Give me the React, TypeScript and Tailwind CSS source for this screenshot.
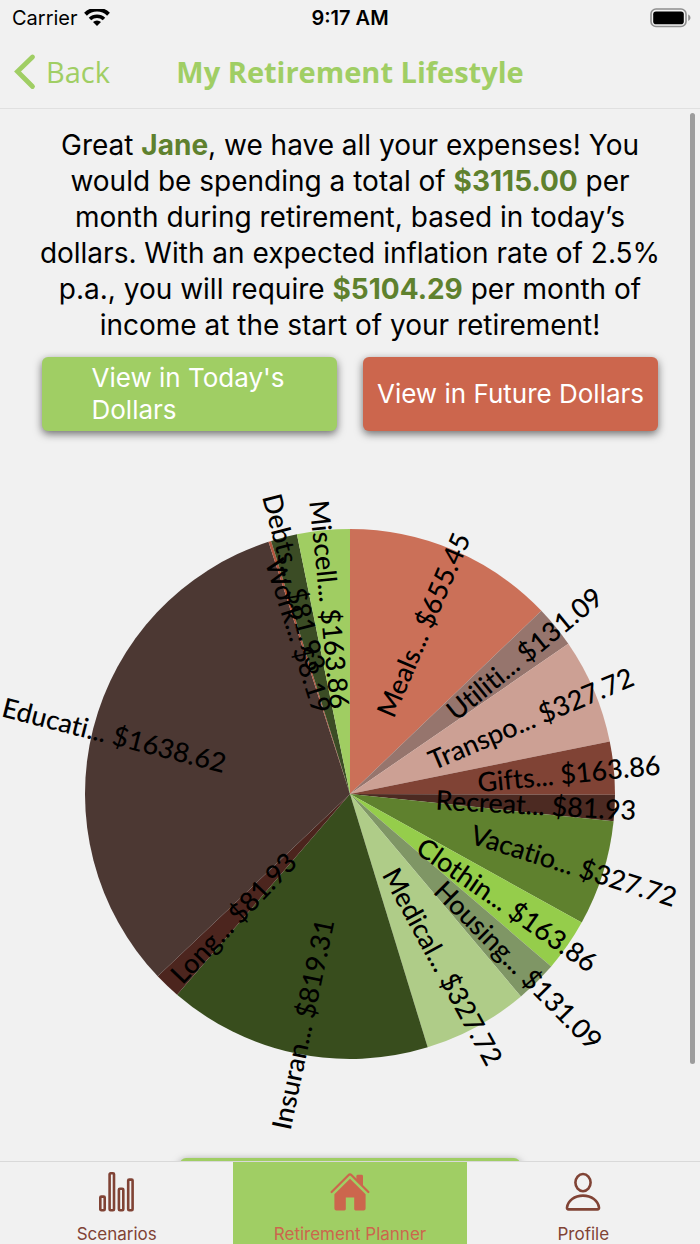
import { useState } from 'react';

type Expense = {
  name: string;
  amount: number;
  color: string;
};

const expenses: Expense[] = [
  { name: 'Meals...', amount: 655.45, color: '#cb7058' },
  { name: 'Utiliti...', amount: 131.09, color: '#96756d' },
  { name: 'Transpo...', amount: 327.72, color: '#cca094' },
  { name: 'Gifts...', amount: 163.86, color: '#804335' },
  { name: 'Recreat...', amount: 81.93, color: '#4c2a22' },
  { name: 'Vacatio...', amount: 327.72, color: '#5f812e' },
  { name: 'Clothin...', amount: 163.86, color: '#95cd4b' },
  { name: 'Housing...', amount: 131.09, color: '#7f9665' },
  { name: 'Medical...', amount: 327.72, color: '#afcc88' },
  { name: 'Insuran...', amount: 819.31, color: '#384d1d' },
  { name: 'Long...', amount: 81.93, color: '#4c251e' },
  { name: 'Educati...', amount: 1638.62, color: '#4c3833' },
  { name: 'Work...', amount: 8.19, color: '#b3563f' },
  { name: 'Debts...', amount: 81.93, color: '#3b4c25' },
  { name: 'Miscell...', amount: 163.86, color: '#a0cd62' },
];

const CX = 350;
const CY = 320;
const RADIUS = 265;

// angle in degrees, clockwise from the top
const point = (angle: number, r: number) => {
  const rad = (angle * Math.PI) / 180;
  return { x: CX + r * Math.sin(rad), y: CY - r * Math.cos(rad) };
};

const total = expenses.reduce((sum, e) => sum + e.amount, 0);

const ExpensePie = () => {
  let current = 0;
  const slices = expenses.map((expense, i) => {
    const start = current;
    const end = start + (expense.amount / total) * 360;
    current = end;
    const mid = (start + end) / 2;
    const flipped = mid > 180;
    const from = point(start, RADIUS);
    const to = point(end, RADIUS);
    // neighbours alternate between two distances so they overlap less
    const anchor = point(mid, i % 2 === 0 ? 86 : 128);
    return {
      ...expense,
      path: `M${CX} ${CY}L${from.x} ${from.y}A${RADIUS} ${RADIUS} 0 0 1 ${to.x} ${to.y}Z`,
      anchor,
      flipped,
      rotation: flipped ? mid + 90 : mid - 90,
    };
  });

  return (
    <svg viewBox="0 0 700 660" className="block w-full overflow-visible" role="img" aria-label="Monthly expenses">
      {slices.map((s) => (
        <path key={s.name} d={s.path} fill={s.color} />
      ))}
      {slices.map((s) => (
        <text
          key={s.name}
          x={s.anchor.x}
          y={s.anchor.y}
          dy="11"
          textAnchor={s.flipped ? 'end' : 'start'}
          transform={`rotate(${s.rotation} ${s.anchor.x} ${s.anchor.y})`}
          className="fill-black font-['Lato',sans-serif] text-[27px] font-medium [font-variant-ligatures:none]"
        >
          {s.name} ${s.amount.toFixed(2)}
        </text>
      ))}
    </svg>
  );
};

const StatusBar = () => (
  <div className="grid h-9 shrink-0 grid-cols-[1fr_auto_1fr] items-center px-2 text-[20px] text-black">
    <div className="flex items-center gap-1.5 pl-1">
      <span>Carrier</span>
      <svg viewBox="0 0 26 19" className="h-[19px] w-[26px]" fill="none" stroke="#000" strokeWidth="4">
        <path d="M1.5 5.2a16.5 16.5 0 0 1 23 0" />
        <path d="M6 10a10.2 10.2 0 0 1 14 0" strokeWidth="3.6" />
        <path d="M13 17l-4-4a5.8 5.8 0 0 1 8 0z" fill="#000" stroke="none" />
      </svg>
    </div>
    <span className="text-center font-semibold">9:17 AM</span>
    <svg viewBox="0 0 42 20" className="h-5 w-[42px] justify-self-end">
      <rect x="1" y="1" width="35" height="17.5" rx="5" fill="none" stroke="#8f8f8f" strokeWidth="1.6" />
      <rect x="3.2" y="3.4" width="30.6" height="12.8" rx="2.8" fill="#000" />
      <path d="M38.2 6.6c3 1.4 3 5 0 6.4z" fill="#8f8f8f" />
    </svg>
  </div>
);

const NavBar = () => (
  <header className="grid h-[73px] shrink-0 grid-cols-[1fr_auto_1fr] items-center border-b border-[#e0e0e0] px-3 font-['Open_Sans',sans-serif] text-[29px] text-[#a0ce64]">
    <button type="button" className="flex items-center gap-2 justify-self-start">
      <svg viewBox="0 0 26 38" className="h-[38px] w-[26px]" fill="none" stroke="currentColor" strokeWidth="4.8" strokeLinecap="round" strokeLinejoin="miter">
        <path d="M20.5 4L5.5 18.5l15 15" />
      </svg>
      Back
    </button>
    <h1 className="font-bold">My Retirement Lifestyle</h1>
  </header>
);

const ScenariosIcon = () => (
  <svg viewBox="0 0 36 40" className="h-10 w-9" fill="none" stroke="currentColor" strokeWidth="2.6">
    <rect x="1.3" y="24.6" width="4.4" height="13.6" rx="1" />
    <rect x="10.6" y="1.3" width="4.4" height="36.9" rx="1" />
    <rect x="19.9" y="16.8" width="4.4" height="21.4" rx="1" />
    <rect x="29.2" y="7.6" width="4.4" height="30.6" rx="1" />
  </svg>
);

const HouseIcon = () => (
  <svg viewBox="0 0 40 40" className="size-10" fill="currentColor">
    <path d="M26.4 7.6V4.2q0-1.4 1.4-1.4h3.8q1.4 0 1.4 1.4v10z" />
    <path d="M1.6 20L18.4 3.2q1.6-1.6 3.2 0L38.4 20" fill="none" stroke="currentColor" strokeWidth="2.2" strokeLinecap="round" />
    <path d="M4.4 22.2L20 6.8l15.6 15.4v14.2q0 2-2 2h-8q-1.4 0-1.4-1.4V25.4h-8.4V37q0 1.4-1.4 1.4h-8q-2 0-2-2z" />
  </svg>
);

const ProfileIcon = () => (
  <svg viewBox="0 0 36 40" className="h-10 w-9" fill="none" stroke="currentColor" strokeWidth="2.6">
    <ellipse cx="18" cy="10.6" rx="7.6" ry="8.6" />
    <path d="M3.6 37.4q-1.8 0-1.6-1.8C2.8 28.6 9.6 23.6 18 23.6s15.2 5 16 12q.2 1.8-1.6 1.8z" />
  </svg>
);

const tabs = [
  { label: 'Scenarios', icon: <ScenariosIcon /> },
  { label: 'Retirement Planner', icon: <HouseIcon /> },
  { label: 'Profile', icon: <ProfileIcon /> },
];

const TabBar = () => {
  const [active, setActive] = useState('Retirement Planner');

  return (
    <nav className="grid h-[83px] shrink-0 grid-cols-3 border-t border-[#d9d9d9] bg-[#f1f1f1] text-[17px]">
      {tabs.map((tab) => (
        <button
          key={tab.label}
          type="button"
          onClick={() => setActive(tab.label)}
          className={
            active === tab.label
              ? 'flex flex-col items-center gap-2.5 bg-[#a0ce64] pt-2.5 leading-6 text-[#cc664d]'
              : 'flex flex-col items-center gap-2.5 pt-2.5 leading-6 text-[#804335]'
          }
        >
          {tab.icon}
          {tab.label}
        </button>
      ))}
    </nav>
  );
};

export default function App() {
  return (
    <div className="relative flex h-screen flex-col bg-[#f1f1f1] font-['Inter',sans-serif]">
      <StatusBar />
      <NavBar />

      <main className="min-h-0 flex-1 overflow-x-hidden overflow-y-auto pt-[18px] [scrollbar-width:none]">
        <p className="px-8 text-center text-[28px] leading-9 text-black">
          Great <strong className="text-[#5f812e]">Jane</strong>, we have all your expenses! You would be
          spending a total of <strong className="text-[#5f812e]">$3115.00</strong> per month during
          retirement, based in today’s dollars. With an expected inflation rate of 2.5% p.a., you will
          require <strong className="text-[#5f812e]">$5104.29</strong> per month of income at the start of
          your retirement!
        </p>

        {/* Dollar toggles */}
        <div className="mt-[14px] grid grid-cols-2 gap-[26px] px-[42px] text-[26px] leading-8 text-white">
          <button type="button" className="flex h-[74px] items-center justify-center rounded-md bg-[#a0ce64] shadow-[0_3px_8px_rgba(0,0,0,0.55)]">
            <span className="w-[196px] text-left">View in Today's Dollars</span>
          </button>
          <button type="button" className="h-[74px] whitespace-nowrap rounded-md bg-[#cc664d] shadow-[0_3px_8px_rgba(0,0,0,0.55)]">
            View in Future Dollars
          </button>
        </div>

        <div className="mt-[43px]">
          <ExpensePie />
        </div>

        <div className="flex justify-center pt-6 pb-8">
          <button type="button" aria-label="Continue" className="h-[74px] w-[340px] rounded-md bg-[#a0ce64] shadow-[0_3px_8px_rgba(0,0,0,0.55)]" />
        </div>
      </main>

      {/* Scroll indicator */}
      <div className="absolute top-[113px] right-[5px] h-[951px] w-[5px] rounded-full bg-[#9c9c9c]" />

      <TabBar />
    </div>
  );
}
